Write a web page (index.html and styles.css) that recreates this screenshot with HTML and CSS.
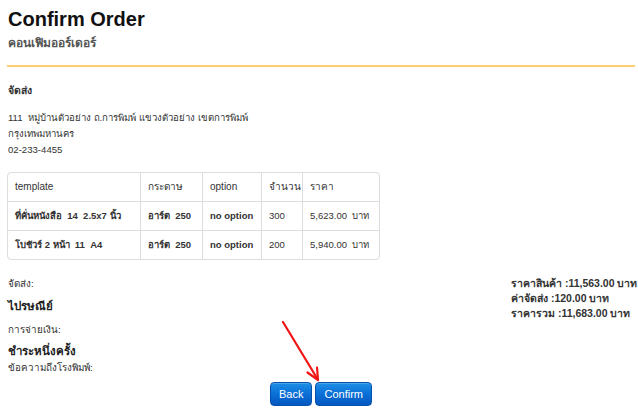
FILE: index.html
```html
<!DOCTYPE html>
<html lang="th">
<head>
<meta charset="utf-8">
<title>Confirm Order</title>
<link rel="stylesheet" href="styles.css">
</head>
<body>
<div class="page">
  <h1 class="title">Confirm Order</h1>
  <div class="subtitle">คอนเฟิมออร์เดอร์</div>
  <div class="rule"></div>

  <div class="section-label">จัดส่ง</div>
  <div class="address">
    <div>111&nbsp; หมู่บ้านตัวอย่าง ถ.การพิมพ์ แขวงตัวอย่าง เขตการพิมพ์</div>
    <div>กรุงเทพมหานคร</div>
    <div>02-233-4455</div>
  </div>

  <table class="items">
    <colgroup>
      <col class="c1"><col class="c2"><col class="c3"><col class="c4"><col class="c5">
    </colgroup>
    <thead>
      <tr><th>template</th><th>กระดาษ</th><th>option</th><th>จำนวน</th><th>ราคา</th></tr>
    </thead>
    <tbody>
      <tr><td class="b">ที่คั่นหนังสือ&nbsp; 14&nbsp; 2.5x7 นิ้ว</td><td class="b">อาร์ต&nbsp; 250</td><td class="b">no option</td><td>300</td><td>5,623.00&nbsp; บาท</td></tr>
      <tr><td class="b">โบชัวร์ 2 หน้า&nbsp; 11&nbsp; A4</td><td class="b">อาร์ต&nbsp; 250</td><td class="b">no option</td><td>200</td><td>5,940.00&nbsp; บาท</td></tr>
    </tbody>
  </table>

  <div class="summary">
    <div class="info">
      <div class="lbl l1">จัดส่ง:</div>
      <div class="val v1">ไปรษณีย์</div>
      <div class="lbl l2">การจ่ายเงิน:</div>
      <div class="val v2">ชำระหนึ่งครั้ง</div>
      <div class="lbl l3">ข้อความถึงโรงพิมพ์:</div>
    </div>
    <div class="totals">
      <div>ราคาสินค้า :11,563.00 บาท</div>
      <div>ค่าจัดส่ง :120.00 บาท</div>
      <div>ราคารวม :11,683.00 บาท</div>
    </div>
  </div>

  <div class="actions">
    <button class="btn">Back</button>
    <button class="btn">Confirm</button>
  </div>

  <svg class="arrow" width="638" height="410" viewBox="0 0 638 410" aria-hidden="true">
    <line x1="283" y1="322" x2="317.5" y2="379" stroke="#f21414" stroke-width="2.2" stroke-linecap="round"/>
    <polyline points="307.5,372.5 318,380 317,367.5" fill="none" stroke="#f21414" stroke-width="2.2" stroke-linecap="round" stroke-linejoin="round"/>
  </svg>
</div>
</body>
</html>
```
FILE: styles.css
```css
html, body {
  margin: 0;
  padding: 0;
  background: #ffffff;
}
body {
  font-family: "Liberation Sans", Arial, sans-serif;
  color: #333333;
  font-size: 10px;
}
.page {
  position: relative;
  width: 628px;
  height: 410px;
  padding: 0 3px 0 7px;
  overflow: hidden;
}
.title {
  margin: 7px 0 0 1px;
  font-size: 20px;
  line-height: 24px;
  font-weight: bold;
  color: #111111;
}
.subtitle {
  margin: 4px 0 0 1px;
  font-size: 12px;
  line-height: 16px;
  font-weight: bold;
  color: #555555;
}
.rule {
  margin-top: 14px;
  height: 2px;
  background: #fcd070;
}
.section-label {
  margin: 15px 0 0 1px;
  font-size: 10.5px;
  line-height: 16px;
  font-weight: bold;
  color: #333333;
}
.address {
  margin: 12px 0 0 1px;
  font-size: 9.6px;
  line-height: 16px;
  color: #333333;
}
.items {
  margin-top: 14px;
  width: 373px;
  table-layout: fixed;
  border-collapse: separate;
  border-spacing: 0;
  border: 1px solid #dddddd;
  border-radius: 4px;
  font-size: 9.5px;
  color: #333333;
}
.items col.c1 { width: 132px; }
.items col.c2 { width: 62px; }
.items col.c3 { width: 59px; }
.items col.c4 { width: 41px; }
.items col.c5 { width: 77px; }
.items th,
.items td {
  padding: 7px 7px;
  line-height: 14px;
  text-align: left;
  white-space: nowrap;
  border-left: 1px solid #dddddd;
  border-top: 1px solid #dddddd;
  font-weight: normal;
}
.items th { border-top: none; font-size: 10px; }
.items th:first-child,
.items td:first-child { border-left: none; }
.items td.b { font-weight: bold; }

.summary {
  display: flex;
  justify-content: space-between;
  align-items: flex-start;
}
.info {
  margin-left: 1px;
}
.lbl {
  font-size: 9.8px;
  line-height: 16px;
  color: #333333;
}
.val {
  font-size: 11.5px;
  line-height: 16px;
  font-weight: bold;
  color: #222222;
}
.l1 { margin-top: 16px; }
.v1 { margin-top: 6px; }
.l2 { margin-top: 8px; }
.v2 { margin-top: 5px; }
.l3 { margin-top: 1px; }
.totals {
  margin-top: 16px;
  width: 124px;
  font-size: 10.5px;
  line-height: 15px;
  font-weight: bold;
  color: #333333;
  white-space: nowrap;
}
.actions {
  display: flex;
  justify-content: center;
  gap: 3px;
  margin-top: 6px;
}
.btn {
  height: 24px;
  padding: 0 8px;
  font-family: "Liberation Sans", Arial, sans-serif;
  font-size: 11px;
  color: #ffffff;
  border: 1px solid #0650a8;
  border-radius: 4px;
  background: linear-gradient(to bottom, #1d8fe6 0%, #0a6fd6 50%, #0558c0 100%);
  box-shadow: inset 0 1px 0 rgba(255,255,255,0.2);
}
.arrow {
  position: absolute;
  left: 0;
  top: 0;
  pointer-events: none;
}
```
